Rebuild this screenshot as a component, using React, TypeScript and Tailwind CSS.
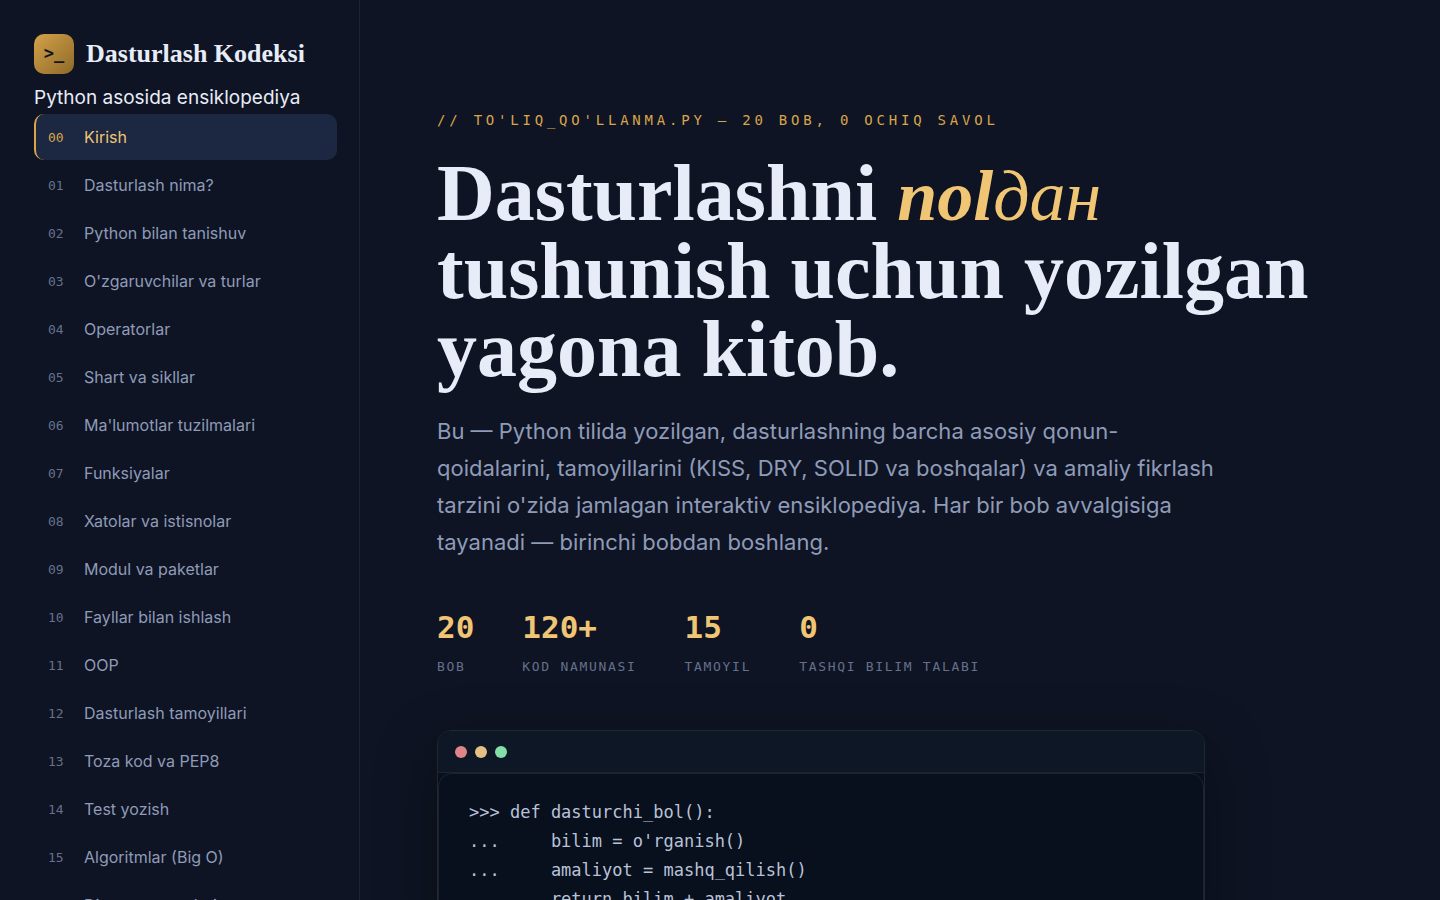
import { clsx } from "clsx";

const chapters = [
  "Kirish",
  "Dasturlash nima?",
  "Python bilan tanishuv",
  "O'zgaruvchilar va turlar",
  "Operatorlar",
  "Shart va sikllar",
  "Ma'lumotlar tuzilmalari",
  "Funksiyalar",
  "Xatolar va istisnolar",
  "Modul va paketlar",
  "Fayllar bilan ishlash",
  "OOP",
  "Dasturlash tamoyillari",
  "Toza kod va PEP8",
  "Test yozish",
  "Algoritmlar (Big O)",
  "Dizayn patternlari",
];

const stats = [
  { value: "20", label: "Bob" },
  { value: "120+", label: "Kod namunasi" },
  { value: "15", label: "Tamoyil" },
  { value: "0", label: "Tashqi bilim talabi" },
];

const code = `>>> def dasturchi_bol():
...     bilim = o'rganish()
...     amaliyot = mashq_qilish()
...     return bilim + amaliyot`;

const Sidebar = () => {
  return (
    <aside className="w-90 shrink-0 overflow-y-auto border-r border-[#1b2230] pt-[34px] pr-[22px] pl-[34px] [scrollbar-width:none]">
      <div className="flex items-center gap-3">
        <div className="flex size-10 shrink-0 items-center justify-center rounded-[10px] bg-linear-to-br from-[#d4a24a] to-[#8f6a28] font-['DejaVu_Sans_Mono',monospace] text-[17px] font-bold text-[#0e1422]">
          &gt;_
        </div>
        <span className="font-['Liberation_Serif',serif] text-[26px] leading-10 font-bold whitespace-nowrap text-[#e8ecf8]">
          Dasturlash Kodeksi
        </span>
      </div>
      <p className="mt-2 text-[19px] leading-8 whitespace-nowrap">
        Python asosida ensiklopediya
      </p>
      <nav className="flex flex-col gap-0.5">
        {chapters.map((title, index) => (
          <a
            key={title}
            href={`#bob-${index}`}
            className={clsx(
              "flex h-[46px] shrink-0 items-center gap-3 rounded-[10px] border-l-2 px-3 text-base whitespace-nowrap",
              index === 0
                ? "border-[#d9a54c] bg-[#1c2742] text-[#f0c674]"
                : "border-transparent text-[#8f9bb8]"
            )}
          >
            <span
              className={clsx(
                "w-6 shrink-0 pt-0.5 font-['DejaVu_Sans_Mono',monospace] text-[13px]",
                index === 0 ? "text-[#d9a54c]" : "text-[#65718c]"
              )}
            >
              {String(index).padStart(2, "0")}
            </span>
            {title}
          </a>
        ))}
      </nav>
    </aside>
  );
};

const Terminal = () => {
  return (
    <div className="mt-[51px] max-w-3xl overflow-hidden rounded-[14px] border border-[#222730] bg-[#080f1d] shadow-[0_20px_60px_rgba(0,0,0,0.35)]">
      <div className="flex h-[42px] items-center gap-2 border-b border-[#1b2432] bg-[#0e1726] px-[17px]">
        <span className="size-3 rounded-full bg-[#e08488]" />
        <span className="size-3 rounded-full bg-[#e4c083]" />
        <span className="size-3 rounded-full bg-[#83e0a4]" />
      </div>
      <pre className="rounded-[14px] border border-[#1b2432] px-[30px] py-6 font-['DejaVu_Sans_Mono',monospace] text-[17px] leading-[29px] text-[#b9c2d8]">
        {code}
      </pre>
    </div>
  );
};

const App = () => {
  return (
    <div className="flex h-screen overflow-hidden bg-[#0e1423] font-['Inter',sans-serif] text-[#e8ecf8]">
      <Sidebar />
      <main className="min-w-0 flex-1 overflow-y-auto px-[77px] pt-[108px] [scrollbar-width:none]">
        <p className="font-['DejaVu_Sans_Mono',monospace] text-sm leading-6 tracking-[0.27em] text-[#d9a54c] uppercase">
          // To'liq_qo'llanma.py — 20 bob, 0 ochiq savol
        </p>
        <h1 className="mt-[22px] font-['Liberation_Serif',serif] text-[80px] leading-[78px] font-bold">
          Dasturlashni{" "}
          <em className="text-[72px] leading-none text-[#f0c674]">
            nol<span className="font-normal">дан</span>
          </em>
          <br />
          tushunish uchun yozilgan
          <br />
          yagona kitob.
        </h1>
        <p className="mt-[25px] max-w-[784px] text-[22px] leading-[37px] text-[#8f9bb8]">
          Bu — Python tilida yozilgan, dasturlashning barcha asosiy
          qonun-qoidalarini, tamoyillarini (KISS, DRY, SOLID va boshqalar) va
          amaliy fikrlash tarzini o'zida jamlagan interaktiv ensiklopediya. Har
          bir bob avvalgisiga tayanadi — birinchi bobdan boshlang.
        </p>
        <dl className="mt-[44px] flex flex-wrap gap-12 font-['DejaVu_Sans_Mono',monospace]">
          {stats.map((stat) => (
            <div key={stat.label} className="flex flex-col-reverse gap-1.5">
              <dt className="text-[13px] leading-6 tracking-[0.13em] text-[#65718c] uppercase">
                {stat.label}
              </dt>
              <dd className="text-[31px] leading-[44px] font-bold text-[#f0c674]">
                {stat.value}
              </dd>
            </div>
          ))}
        </dl>
        <Terminal />
      </main>
    </div>
  );
};

export default App;
